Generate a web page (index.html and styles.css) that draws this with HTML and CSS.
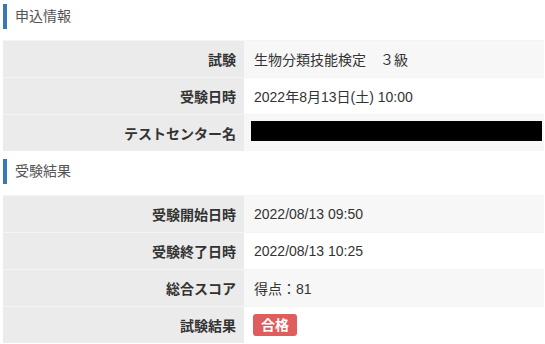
FILE: index.html
```html
<!DOCTYPE html>
<html lang="ja">
<head>
    <meta charset="UTF-8">
    <meta name="viewport" content="width=device-width, initial-scale=1.0">
    <title>受験情報</title>
    <link rel="stylesheet" href="styles.css">
</head>
<body>

<div class="page">
    <h2 class="section-title">申込情報</h2>
    <table class="info-table">
        <tr>
            <th>試験</th>
            <td>生物分類技能検定　３級</td>
        </tr>
        <tr>
            <th>受験日時</th>
            <td>2022年8月13日(土) 10:00</td>
        </tr>
        <tr>
            <th>テストセンター名</th>
            <td><span class="masked"></span></td>
        </tr>
    </table>

    <h2 class="section-title">受験結果</h2>
    <table class="info-table">
        <tr>
            <th>受験開始日時</th>
            <td>2022/08/13 09:50</td>
        </tr>
        <tr>
            <th>受験終了日時</th>
            <td>2022/08/13 10:25</td>
        </tr>
        <tr>
            <th>総合スコア</th>
            <td>得点：81</td>
        </tr>
        <tr>
            <th>試験結果</th>
            <td><span class="badge badge-pass">合格</span></td>
        </tr>
    </table>
</div>

</body>
</html>
```

FILE: styles.css
```css
:root {
    --text-color: #333;
    --title-color: #555;
    --accent-color: #3a78b5;
    --label-bg: #ebebeb;
    --row-odd-bg: #f7f7f7;
    --row-even-bg: #fff;
    --row-border: #f4f4f4;
    --pass-color: #e05d5d;
}

body {
    margin: 0;
    background: #fff;
    font-family: "Liberation Sans", "Noto Sans CJK JP", sans-serif;
    font-size: 14px;
    color: var(--text-color);
}

.page {
    padding: 4px 1px 0 3px;
}

.section-title {
    margin: 0 0 11px;
    padding-left: 8px;
    border-left: 4px solid var(--accent-color);
    font-size: 14px;
    font-weight: normal;
    line-height: 25px;
    color: var(--title-color);
}

.info-table {
    width: 100%;
    border-collapse: collapse;
    margin-bottom: 8px;
}

.info-table th,
.info-table td {
    height: 36px;
    padding: 0 8px;
    border-top: 1px solid var(--row-border);
    vertical-align: middle;
}

.info-table th {
    width: 225px;
    text-align: right;
    font-weight: bold;
    background-color: var(--label-bg);
}

.info-table td {
    padding-left: 10px;
    background-color: var(--row-even-bg);
}

.info-table tr:nth-child(odd) td {
    background-color: var(--row-odd-bg);
}

.masked {
    display: block;
    height: 20px;
    margin: -4px -6px 0 -3px;
    background: #000;
}

.badge {
    display: inline-block;
    padding: 3px 8px;
    margin-left: -1px;
    border-radius: 3px;
    font-size: 14px;
    font-weight: bold;
    line-height: 16px;
    color: #fff;
}

.badge-pass {
    background-color: var(--pass-color);
}
```
